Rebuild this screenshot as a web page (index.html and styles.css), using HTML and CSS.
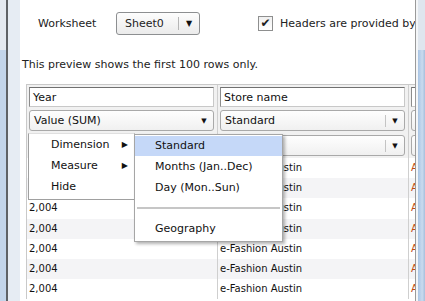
FILE: index.html
```html
<!DOCTYPE html>
<html lang="en">
<head>
  <meta charset="UTF-8" />
  <title>Data Preview</title>
  <link rel="stylesheet" href="styles.css">
</head>
<body>
  <div class="frame-left">
    <div class="edge"></div>
    <div class="rule"></div>
    <div class="pad"></div>
  </div>

  <div class="main">
    <div class="toolbar">
      <span class="label">Worksheet</span>
      <div class="picker">
        <span class="picker-text">Sheet0</span>
        <span class="picker-arrow">&#9660;</span>
      </div>
      <label class="check">
        <span class="box">&#10004;</span>
        <span>Headers are provided by the first row</span>
      </label>
    </div>

    <div class="note">This preview shows the first 100 rows only.</div>

    <div class="grid">
      <div class="col">
        <div class="head">
          <div class="field">Year</div>
          <div class="drop"><span>Value (SUM)</span><i class="arrow plain">&#9660;</i></div>
          <div class="drop"><span></span><i class="arrow">&#9660;</i></div>
        </div>
        <div class="cell">2,004</div>
        <div class="cell alt">2,004</div>
        <div class="cell">2,004</div>
        <div class="cell alt">2,004</div>
        <div class="cell">2,004</div>
        <div class="cell alt">2,004</div>
        <div class="cell">2,004</div>
      </div>
      <div class="col">
        <div class="head">
          <div class="field">Store name</div>
          <div class="drop"><span>Standard</span><i class="arrow">&#9660;</i></div>
          <div class="drop"><span></span><i class="arrow">&#9660;</i></div>
        </div>
        <div class="cell">e-Fashion Austin</div>
        <div class="cell alt">e-Fashion Austin</div>
        <div class="cell">e-Fashion Austin</div>
        <div class="cell alt">e-Fashion Austin</div>
        <div class="cell">e-Fashion Austin</div>
        <div class="cell alt">e-Fashion Austin</div>
        <div class="cell">e-Fashion Austin</div>
      </div>
      <div class="col clip">
        <div class="head">
          <div class="field"></div>
          <div class="drop"></div>
          <div class="drop"></div>
        </div>
        <div class="cell red">Austin</div>
        <div class="cell alt red">Austin</div>
        <div class="cell red">Austin</div>
        <div class="cell alt red">Austin</div>
        <div class="cell red">Austin</div>
        <div class="cell alt red">Austin</div>
        <div class="cell red">Austin</div>
      </div>
    </div>

    <div class="menu">
      <div class="item">Dimension<span class="tri">&#9654;</span></div>
      <div class="item">Measure<span class="tri">&#9654;</span></div>
      <div class="item">Hide</div>
    </div>

    <div class="submenu">
      <div class="item on">Standard</div>
      <div class="item">Months (Jan..Dec)</div>
      <div class="item">Day (Mon..Sun)</div>
      <div class="sep"></div>
      <div class="item">Geography</div>
    </div>
  </div>

  <div class="frame-right">
    <div class="rule"></div>
    <div class="gap"></div>
    <div class="scroll">
      <div class="thumb"></div>
    </div>
  </div>
</body>
</html>
```

FILE: styles.css
```css
body {
  margin: 0;
  width: 425px;
  height: 301px;
  overflow: hidden;
  display: flex;
  background: #fff;
  font-family: "DejaVu Sans", Verdana, sans-serif;
  font-size: 11px;
  color: #222;
}

.frame-left {
  display: flex;
  width: 20px;
  flex-shrink: 0;
}

.frame-left .edge {
  width: 6px;
  background: linear-gradient(#e4e9f0 0, #e4e9f0 50px, #c3d5ea 50px);
}

.frame-left .rule {
  width: 2px;
  background: #5f6266;
}

.frame-left .pad {
  flex: 1;
  background: #e6ecf3;
}

.main {
  flex: 1;
  position: relative;
  overflow: hidden;
  padding-top: 11px;
}

.toolbar {
  display: flex;
  align-items: center;
  height: 24px;
  padding-left: 18px;
}

.label {
  width: 78px;
  flex-shrink: 0;
}

.picker {
  display: flex;
  align-items: center;
  flex-shrink: 0;
  width: 84px;
  height: 23px;
  border: 1px solid #8d8f91;
  border-radius: 3px;
  background: linear-gradient(#fdfdfd, #ebebeb);
  box-sizing: border-box;
}

.picker-text {
  flex: 1;
  padding-left: 8px;
}

.picker-arrow {
  flex-shrink: 0;
  width: 20px;
  border-left: 1px solid #b5b5b5;
  text-align: center;
  font-size: 8px;
  line-height: 13px;
  color: #111;
}

.check {
  display: flex;
  align-items: center;
  gap: 7px;
  margin-left: 58px;
  white-space: nowrap;
}

.box {
  flex-shrink: 0;
  width: 13px;
  height: 13px;
  border: 1px solid #8e8f8f;
  background: linear-gradient(#f0f0f0, #fff);
  font-size: 12px;
  line-height: 13px;
  text-align: center;
  color: #1e1e1e;
}

.note {
  margin-top: 23px;
  padding-left: 2px;
  white-space: nowrap;
}

.grid {
  display: grid;
  grid-template-columns: 191px 191px 40px;
  margin: 13px 0 0 6px;
  border-top: 1px solid #c9c9c9;
  border-left: 1px solid #c9c9c9;
}

.col {
  border-right: 1px solid #cfcfcf;
}

.head {
  display: flex;
  flex-direction: column;
  gap: 3px;
  padding: 2px 3px 2px 2px;
  background: #f1f1f1;
}

.field {
  height: 20px;
  border: 1px solid #8c8c8c;
  border-color: #707070 #c8c8c8 #c8c8c8 #8c8c8c;
  background: #fff;
  padding-left: 3px;
  line-height: 20px;
  box-sizing: border-box;
  color: #111;
}

.drop {
  display: flex;
  align-items: center;
  height: 21px;
  border: 1px solid #a9a9a9;
  border-radius: 3px;
  background: linear-gradient(#fefefe, #f0f0f0);
  box-sizing: border-box;
}

.drop + .drop {
  margin-top: 1px;
}

.drop span {
  flex: 1;
  padding-left: 4px;
  color: #111;
}

.arrow {
  width: 18px;
  font-style: normal;
  font-size: 7px;
  text-align: center;
  line-height: 12px;
  border-left: 1px solid #c4c4c4;
  color: #111;
}

.arrow.plain {
  border-left-color: transparent;
}

.cell {
  height: 20.2px;
  line-height: 20px;
  padding-left: 2px;
  font-size: 10px;
  color: #111;
  white-space: nowrap;
}

.cell.alt {
  background: #f4f4f6;
}

.cell.red {
  color: #c04a10;
}

.clip {
  overflow: hidden;
}

.menu {
  position: absolute;
  left: 8px;
  top: 133px;
  width: 105px;
  padding: 1px 0;
  background: #fff;
  border: 1px solid #a0a0a0;
  border-top-color: #e0e0e0;
}

.menu .item {
  position: relative;
  height: 21px;
  line-height: 20px;
  padding-left: 22px;
  color: #111;
}

.tri {
  position: absolute;
  right: 6px;
  font-size: 8px;
}

.submenu {
  position: absolute;
  left: 114px;
  top: 134px;
  width: 147px;
  padding: 1px 0 1px;
  background: #fff;
  border: 1px solid #a6a6a6;
  box-shadow: 2px 2px 3px rgba(0, 0, 0, 0.3);
}

.submenu .item {
  height: 20px;
  line-height: 20px;
  padding-left: 20px;
  margin-bottom: 1px;
  color: #111;
}

.submenu .item.on {
  background: #c5d8f8;
}

.sep {
  height: 2px;
  margin: 9px 2px 10px;
  background: #c6c6c6;
}

.frame-right {
  display: flex;
  width: 10px;
  flex-shrink: 0;
}

.frame-right .rule {
  width: 1px;
  background: #9a9a9a;
}

.frame-right .gap {
  width: 2px;
  background: #f4f6f8;
}

.scroll {
  flex: 1;
  background: #dfe6ee;
  padding-top: 50px;
}

.thumb {
  height: 100%;
  background: linear-gradient(90deg, #a8c4e4, #c9dbef 60%, #a6bfdc);
}
```
